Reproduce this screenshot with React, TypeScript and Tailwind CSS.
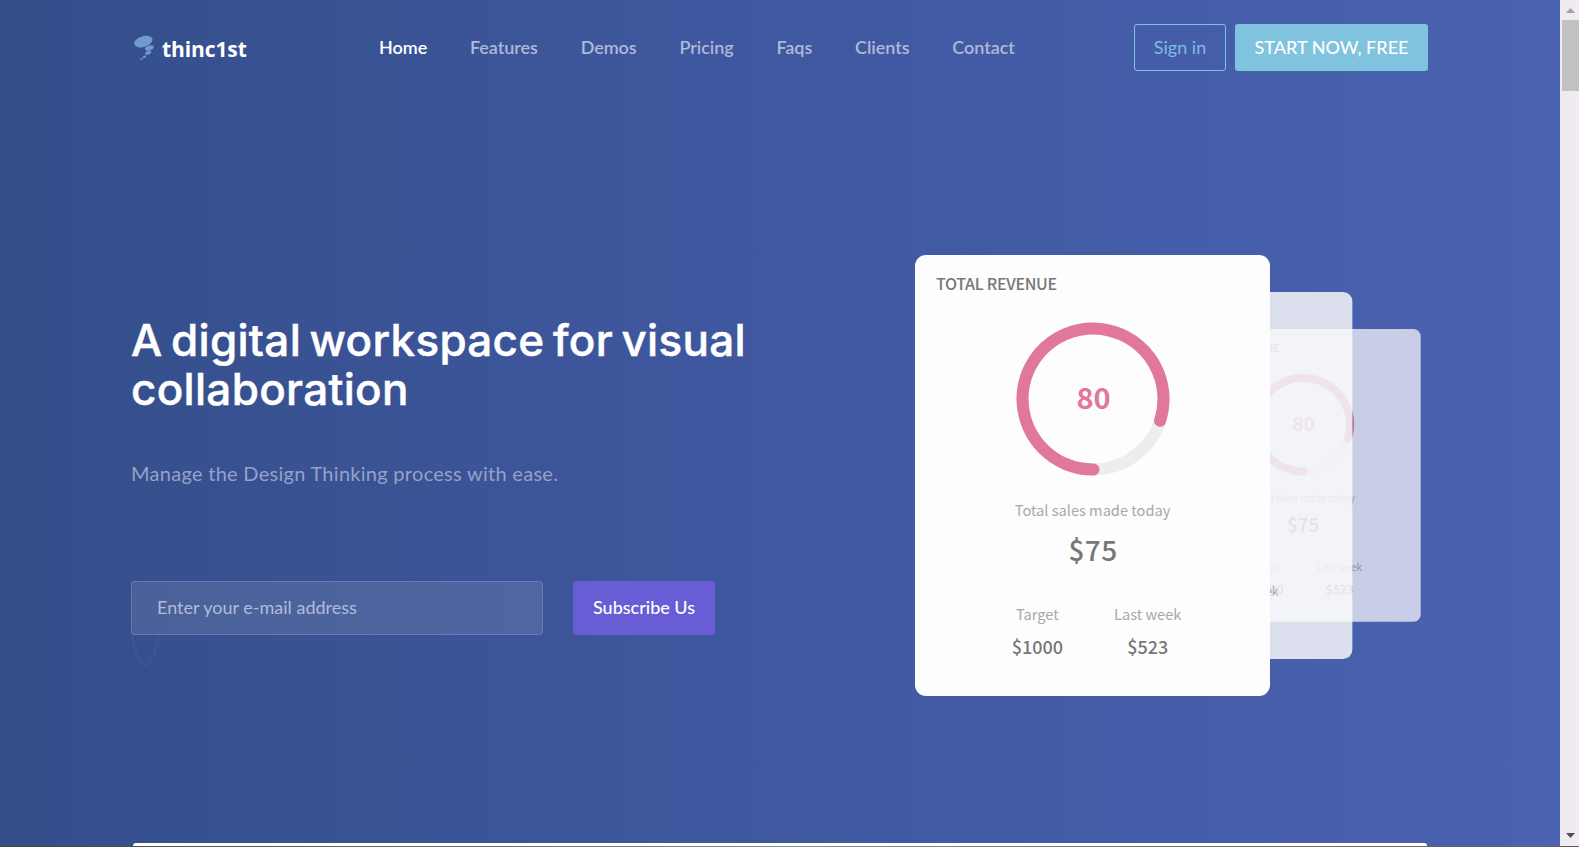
import React from 'react';

const links = ['Home', 'Features', 'Demos', 'Pricing', 'Faqs', 'Clients', 'Contact'];

function Logo() {
  return (
    <a href="#" className="flex w-[248px] shrink-0 items-center pl-[2px]">
      <svg width="29" height="28" viewBox="0 0 29 28" fill="#6f9bd0" className="mt-[3px]">
        <ellipse cx="10.3" cy="6.6" rx="9.4" ry="5.4" transform="rotate(-17 10.3 6.6)" />
        <ellipse cx="16.4" cy="13" rx="4.6" ry="2.3" transform="rotate(-20 16.4 13)" />
        <ellipse cx="15.2" cy="17.8" rx="3.2" ry="1.7" transform="rotate(-20 15.2 17.8)" />
        <ellipse cx="11.4" cy="21.8" rx="1.9" ry="1.1" transform="rotate(-28 11.4 21.8)" />
        <ellipse cx="8.4" cy="24" rx="1.2" ry="0.8" transform="rotate(-28 8.4 24)" />
      </svg>
      <span className="mt-[3px] font-['Open_Sans',sans-serif] text-[21px] font-bold leading-6 tracking-[-0.1px] text-white">
        thinc1st
      </span>
    </a>
  );
}

function Header() {
  return (
    <header className="flex h-[47px] items-center">
      <Logo />
      <nav className="flex gap-[42.7px] text-[18px] font-semibold tracking-[-0.03px]">
        {links.map((l, i) => (
          <a key={l} href="#" className={i === 0 ? 'text-white' : 'text-[#aeb9da]'}>
            {l}
          </a>
        ))}
      </nav>
      <div className="ml-auto mr-px flex h-full gap-[9px] text-[18px]">
        <button className="w-[92px] rounded-[3px] border border-[#7fc4df] text-[#7fbce3]">Sign in</button>
        <button className="w-[193px] rounded-[3px] bg-[#80c3de] font-medium text-white">START NOW, FREE</button>
      </div>
    </header>
  );
}

function RevenueCard({ className }: { className: string }) {
  return (
    <article
      className={`absolute flex h-[441px] w-[355px] origin-top-left flex-col items-center rounded-[11px] bg-[#fdfdfd] font-['Noto_Sans_CJK_SC',sans-serif] text-[#777] ${className}`}
    >
      <h2 className="mt-[16px] w-full pl-[21px] text-[16px] font-medium leading-6 tracking-[-0.3px]">TOTAL REVENUE</h2>
      <div className="mt-[26px] grid place-items-center">
        <svg width="156" height="156" viewBox="-78 -78 156 156" fill="none" strokeWidth="12" className="[grid-area:1/1]">
          <circle r="70.5" stroke="#ededef" />
          <path d="M0.5 70.5A70.5 70.5 0 1 1 67.05 21.8" stroke="#e1779b" strokeLinecap="round" />
        </svg>
        <span className="mt-[-6px] pl-[2px] text-[29px] font-bold leading-8 text-[#e1779b] [grid-area:1/1]">80</span>
      </div>
      <p className="mt-[21px] text-[14.6px] leading-6 text-[#a5a9ae]">Total sales made today</p>
      <p className="mt-[11px] pl-px text-[28px] font-medium leading-8 tracking-[0.3px]">$75</p>
      <dl className="mt-[37px] flex gap-[51px] pl-[8px] text-center">
        <div>
          <dt className="text-[14.6px] leading-6 text-[#a5a9ae]">Target</dt>
          <dd className="mt-[8px] text-[18px] font-medium leading-6">$1000</dd>
        </div>
        <div>
          <dt className="text-[14.6px] leading-6 text-[#a5a9ae]">Last week</dt>
          <dd className="mt-[8px] text-[18px] font-medium leading-6">$523</dd>
        </div>
      </dl>
    </article>
  );
}

function Scrollbar() {
  return (
    <aside className="flex w-[19px] shrink-0 flex-col items-center bg-[#f0ebf2]">
      <svg width="19" height="20" viewBox="0 0 19 20" fill="#a3a3a3">
        <path d="M6 13h9l-4.5-5z" />
      </svg>
      <div className="ml-[2px] h-[71px] w-[17px] bg-[#c1c1c1]" />
      <svg width="19" height="20" viewBox="0 0 19 20" fill="#505050" className="mt-auto">
        <path d="M6 7h9l-4.5 5z" />
      </svg>
    </aside>
  );
}

export default function App() {
  return (
    <div className="flex h-[847px] w-full flex-col overflow-hidden font-['Lato',sans-serif]">
      <div className="flex min-h-0 flex-1">
        <main className="flex flex-1 flex-col bg-linear-to-r from-[#344e8a] via-[#4058a0] to-[#4b62b1] px-[131px] pt-6">
          <Header />
          <section className="flex">
            <div className="mt-[245px] w-[784px] shrink-0">
              <h1 className="font-['Inter',sans-serif] text-[44px] font-medium leading-[49px] tracking-[0.3px] text-white [-webkit-text-stroke:0.5px_white] [word-spacing:-3.5px]">
                A digital workspace for visual
                <br />
                collaboration
              </h1>
              <p className="mt-[44px] text-[20px] leading-[30px] tracking-[0.28px] text-[#95a2c8]">
                Manage the Design Thinking process with ease.
              </p>
              <form className="mt-[93px] flex h-[54px] gap-[30px]">
                <input
                  placeholder="Enter your e-mail address"
                  className="w-[412px] rounded-[4px] border border-white/15 bg-white/10 px-[25px] pb-[2px] text-[18px] text-white placeholder:text-[#b0bcd8]"
                />
                <button type="button" className="w-[142px] rounded-[3px] bg-[#695dd5] pb-[2px] text-[18px] font-medium text-white">
                  Subscribe Us
                </button>
              </form>
              <svg width="30" height="34" viewBox="0 0 30 34" fill="none" stroke="#ffffff" strokeOpacity="0.04" strokeWidth="2">
                <path d="M1 0C3 16 9 30 15 30S25 14 28 0" />
              </svg>
            </div>
            <div className="relative mt-[184px] h-[441px] flex-1">
              <RevenueCard className="left-[270px] top-[74px] scale-[0.664] opacity-70" />
              <RevenueCard className="left-[142px] top-[37px] scale-[0.832] opacity-[0.82]" />
              <RevenueCard className="left-0 top-0" />
            </div>
          </section>
          <div className="mx-[2px] mt-auto h-[3px] shrink-0 rounded-t-[8px] bg-white" />
        </main>
        <Scrollbar />
      </div>
      <div className="h-px shrink-0 bg-linear-to-r from-[#43463f] via-[#7e8f90] to-[#655b52]" />
    </div>
  );
}
